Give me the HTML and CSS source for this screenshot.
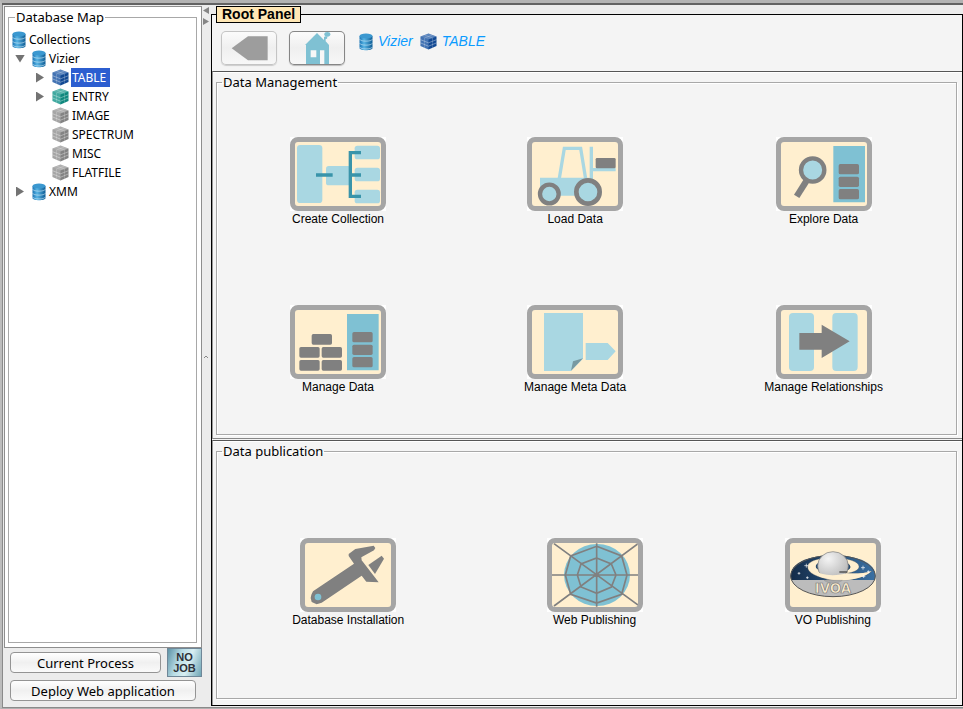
FILE: index.html
```html
<!DOCTYPE html>
<html lang="en">
<head>
  <meta charset="UTF-8" />
  <title>Root Panel</title>
  <link rel="stylesheet" href="styles.css">
</head>
<body>

<!-- shared icons -->
<svg class="defs" aria-hidden="true">
  <defs>
    <linearGradient id="dbFill">
      <stop offset="0" stop-color="#1a74b4"/>
      <stop offset="0.35" stop-color="#58b4e4"/>
      <stop offset="1" stop-color="#0d5c95"/>
    </linearGradient>
    <symbol id="db" viewBox="0 0 14 18">
      <path d="M.5 3v12c0 3 13 3 13 0V3z" fill="url(#dbFill)"/>
      <ellipse cx="7" cy="3" rx="6.500" ry="2.500" fill="#3b98d0"/>
      <path d="M.5 6.200c1 2.600 12 2.600 13 0M.5 10.200c1 2.600 12 2.600 13 0M.5 14c1 2.600 12 2.600 13 0" fill="none" stroke="#d4ebf7" stroke-opacity=".75" stroke-width=".8"/>
    </symbol>
    <symbol id="cube" viewBox="0 0 17 17">
      <path d="M8.500 .5L16.500 3.500V13L8.500 16.500L.5 13V3.500z" fill="currentColor"/>
      <path d="M8.500 .5L16.500 3.500L8.500 6.500L.5 3.500z" fill="#fff" fill-opacity=".3"/>
      <path d="M.5 3.500L8.500 6.500V16.500L.5 13z" fill="#fff" fill-opacity=".2"/>
      <path d="M8.500 6.500L16.500 3.500V13L8.500 16.500z" fill="#000" fill-opacity=".08"/>
      <path d="M.5 6.700L8.500 9.800L16.500 6.700M.5 9.900L8.500 13.200L16.500 9.900" fill="none" stroke="#fff" stroke-opacity=".5" stroke-width=".7"/>
      <path d="M4.500 5V14.800M12.500 5V14.800M4.500 2L12.500 5M12.500 2L4.500 5" fill="none" stroke="#fff" stroke-opacity=".3" stroke-width=".6"/>
    </symbol>
  </defs>
</svg>

<div class="window">
  <aside class="sidebar">
    <div class="map-panel">
      <fieldset class="group map">
        <legend>Database Map</legend>
        <ul class="tree">
          <li>
            <div class="node"><svg class="icon"><use href="#db"/></svg><span>Collections</span></div>
            <ul>
              <li>
                <div class="node"><button class="toggle open" aria-label="Collapse Vizier"></button><svg class="icon"><use href="#db"/></svg><span>Vizier</span></div>
                <ul>
                  <li><div class="node"><button class="toggle" aria-label="Expand TABLE"></button><svg class="icon cube blue"><use href="#cube"/></svg><span class="selected">TABLE</span></div></li>
                  <li><div class="node"><button class="toggle" aria-label="Expand ENTRY"></button><svg class="icon cube teal"><use href="#cube"/></svg><span>ENTRY</span></div></li>
                  <li><div class="node leaf"><svg class="icon cube"><use href="#cube"/></svg><span>IMAGE</span></div></li>
                  <li><div class="node leaf"><svg class="icon cube"><use href="#cube"/></svg><span>SPECTRUM</span></div></li>
                  <li><div class="node leaf"><svg class="icon cube"><use href="#cube"/></svg><span>MISC</span></div></li>
                  <li><div class="node leaf"><svg class="icon cube"><use href="#cube"/></svg><span>FLATFILE</span></div></li>
                </ul>
              </li>
              <li>
                <div class="node"><button class="toggle" aria-label="Expand XMM"></button><svg class="icon"><use href="#db"/></svg><span>XMM</span></div>
              </li>
            </ul>
          </li>
        </ul>
      </fieldset>
    </div>
    <div class="actions">
      <div class="job-row">
        <button class="btn">Current Process</button>
        <button class="job">NO JOB</button>
      </div>
      <button class="btn deploy">Deploy Web application</button>
    </div>
  </aside>

  <div class="splitter">
    <svg width="9" height="20" viewBox="0 0 9 20"><path d="M7 1v7L1 4.500zM1 12v7l6-3.500z" fill="#858585"/></svg>
    <svg class="grip" width="9" height="6" viewBox="0 0 9 6"><path d="M2 4l2-2 2 2" fill="none" stroke="#888"/></svg>
  </div>

  <main class="root">
    <h1 class="root-title">Root Panel</h1>

    <header class="toolbar">
      <button class="nav" aria-label="Back" disabled>
        <svg width="56" height="34" viewBox="0 0 168 102"><path d="M32 52L81 16h59v72H81z" fill="#9d9d9d"/></svg>
      </button>
      <button class="nav home" aria-label="Home">
        <svg width="56" height="34" viewBox="266 93 168 102">
          <path d="M314 135L350 99l21 21v-10h5v14l10 11v57H317v-57z" fill="#7fc1d3"/>
          <ellipse cx="381" cy="103" rx="9" ry="7" fill="#7fc1d3"/>
          <circle cx="377" cy="113" r="4" fill="#7fc1d3"/>
          <path d="M331 151h17v21h-17zM359 151h13v41h-13z" fill="#f7f7f7"/>
        </svg>
      </button>
      <nav class="path">
        <a href="#vizier"><svg class="icon"><use href="#db"/></svg>Vizier</a>
        <a href="#table"><svg class="icon cube blue"><use href="#cube"/></svg>TABLE</a>
      </nav>
    </header>

    <section class="panel management">
      <fieldset class="group tiles">
        <legend>Data Management</legend>

        <button class="tile">
          <span class="frame"><svg viewBox="42 36 258 192">
            <g fill="#a9d7e2">
              <rect x="48" y="45" width="76" height="174" rx="10"/>
              <rect x="135" y="108" width="74" height="58" rx="8"/>
              <rect x="221" y="47" width="76" height="41" rx="8"/>
              <rect x="221" y="113" width="76" height="41" rx="8"/>
              <rect x="221" y="179" width="76" height="41" rx="8"/>
            </g>
            <path d="M105 135h50M240 68h-32v131h32M208 135h32" fill="none" stroke="#3994aa" stroke-width="10"/>
          </svg></span>
          Create Collection
        </button>

        <button class="tile">
          <span class="frame"><svg viewBox="45 36 258 192">
            <path d="M69 143h149v54H69z" fill="#a9d7e2"/>
            <path d="M127 145L142 55h49l15 92M223 50v112M225 119h71" fill="none" stroke="#a9d7e2" stroke-width="10"/>
            <rect x="236" y="84" width="60" height="31" rx="4" fill="#808080"/>
            <circle cx="97" cy="192" r="28" fill="#a9d7e2" stroke="#808080" stroke-width="13"/>
            <circle cx="213" cy="186" r="35" fill="#a9d7e2" stroke="#808080" stroke-width="14"/>
          </svg></span>
          Load Data
        </button>

        <button class="tile">
          <span class="frame"><svg viewBox="45 36 258 192">
            <path d="M202 48h95v169h-95z" fill="#7fc1d3"/>
            <g fill="#808080">
              <rect x="218" y="102" width="61" height="31" rx="5"/>
              <rect x="218" y="140" width="61" height="31" rx="5"/>
              <rect x="218" y="177" width="61" height="31" rx="5"/>
            </g>
            <path d="M125 147L92 199" stroke="#808080" stroke-width="19"/>
            <circle cx="140" cy="120" r="35" fill="#a9d7e2" stroke="#808080" stroke-width="13"/>
          </svg></span>
          Explore Data
        </button>

        <button class="tile">
          <span class="frame"><svg viewBox="42 36 258 192">
            <path d="M198 48h95v169h-95z" fill="#7fc1d3"/>
            <g fill="#808080">
              <rect x="214" y="102" width="61" height="31" rx="5"/>
              <rect x="214" y="140" width="61" height="31" rx="5"/>
              <rect x="214" y="177" width="61" height="31" rx="5"/>
              <rect x="92" y="108" width="61" height="32" rx="5"/>
              <rect x="55" y="147" width="61" height="32" rx="5"/>
              <rect x="122" y="147" width="61" height="32" rx="5"/>
              <rect x="55" y="186" width="61" height="32" rx="5"/>
              <rect x="122" y="186" width="61" height="32" rx="5"/>
            </g>
          </svg></span>
          Manage Data
        </button>

        <button class="tile">
          <span class="frame"><svg viewBox="45 36 258 192">
            <path d="M81 45h117v137l-36 37H81zM206 135h66l24 25l-24 26h-66z" fill="#a9d7e2"/>
            <path d="M198 181L162 218L168 190z" fill="#7899a1"/>
          </svg></span>
          Manage Meta Data
        </button>

        <button class="tile">
          <span class="frame"><svg viewBox="72 36 258 192">
            <rect x="96" y="45" width="75" height="174" rx="12" fill="#a9d7e2"/>
            <rect x="226" y="45" width="76" height="174" rx="12" fill="#a9d7e2"/>
            <path d="M127 105h67V80l84 50l-84 50v-25h-67z" fill="#808080"/>
          </svg></span>
          Manage Relationships
        </button>
      </fieldset>
    </section>

    <section class="panel publication">
      <fieldset class="group tiles">
        <legend>Data publication</legend>

        <button class="tile">
          <span class="frame"><svg viewBox="60 39 258 192">
            <path d="M79 194L84 184L207 101L191 78V72L211 57L266 47L271 54L267 61L229 82L230 91L281 157L244 155L230 137L110 218L95 223L80 216L77 204z" fill="#808080"/>
            <path d="M250 105L290 77L297 86L270 132z" fill="#808080"/>
            <circle cx="99" cy="201" r="10" fill="#7fc1d3"/>
          </svg></span>
          Database Installation
        </button>

        <button class="tile">
          <span class="frame"><svg viewBox="39 39 258 192">
            <ellipse cx="174" cy="135" rx="99" ry="93" fill="#7fc1d3"/>
            <path d="M173 40v190M39 135h262M45 41L301 228M297 41L45 228M173 49L248 78L264 135L248 193L173 219L95 193L79 135L95 78zM173 84L217 102L231 135L217 171L173 190L126 171L115 135L126 102z" fill="none" stroke="#808080" stroke-width="5"/>
            <circle cx="173" cy="135" r="7" fill="#808080"/>
          </svg></span>
          Web Publishing
        </button>

        <button class="tile">
          <span class="frame"><svg viewBox="39 39 258 192">
            <defs>
              <radialGradient id="planet" cx=".35" cy=".25" r=".8">
                <stop offset="0" stop-color="#f4f4f4"/>
                <stop offset="1" stop-color="#b4b4b4"/>
              </radialGradient>
              <linearGradient id="sky">
                <stop offset="0" stop-color="#142c49"/>
                <stop offset="1" stop-color="#3a70a3"/>
              </linearGradient>
            </defs>
            <ellipse cx="168" cy="138" rx="127" ry="62" fill="#bcbcbc"/>
            <path d="M42 150C30 105 86 76 168 76S306 105 294 150z" fill="url(#sky)"/>
            <ellipse cx="168" cy="138" rx="127" ry="62" fill="none" stroke="#555" stroke-width="3"/>
            <path d="M92 110C92 73 243 76 246 109C247 121 227 128 208 130C255 132 279 128 284 123C260 147 204 155 164 149C120 143 91 128 92 110z" fill="#ffefcf" stroke="#555" stroke-width="1"/>
            <path d="M117 113C113 99 130 92 168 92C208 92 223 103 220 113C215 131 127 132 117 113z" fill="#27496d"/>
            <ellipse cx="168" cy="108" rx="46" ry="43" fill="url(#planet)" stroke="#777" stroke-width="2"/>
            <path d="M113 117C126 138 175 139 210 130C233 132 266 130 284 123C258 148 205 154 164 149C125 142 103 131 113 117z" fill="#ffefcf"/>
            <path d="M187 126h24" stroke="#555" stroke-width="4"/>
            <path d="M141 151c14 11 42 11 55 0z" fill="#aaa" stroke="#888"/>
            <path d="M88 101v12M82 107h12M66 126v8M62 130h8M91 139v8M87 143h8M258 107v12M252 113h12M274 121v8M270 125h8M260 134v10M255 139h10" stroke="#fff" stroke-width="2"/>
            <text x="168" y="189" text-anchor="middle" class="ivoa">IVOA</text>
          </svg></span>
          VO Publishing
        </button>
      </fieldset>
    </section>
  </main>
</div>

</body>
</html>
```

FILE: styles.css
```css
* { box-sizing: border-box; }

body {
  margin: 0;
  background: #ececec;
  color: #000;
  font-family: "Noto Sans", sans-serif;
  font-size: 13px;
}

button {
  margin: 0;
  padding: 0;
  border: 0;
  background: none;
  color: inherit;
  font: inherit;
}

svg { display: block; }
.defs { position: absolute; width: 0; height: 0; }

.window {
  display: flex;
  min-height: 100vh;
  border-top: 3px solid #b3b3b3;
  border-bottom: 1px solid #b0b0b0;
  border-left: 2px solid #bcbcbc;
  background: #ececec;
  box-shadow: inset 0 2px #626262, inset 1px 0 #8a8a8a, inset 0 -1px #8a8a8a;
}

/* left side */
.sidebar {
  display: flex;
  flex-direction: column;
  width: 200px;
  padding: 3px 0 7px 2px;
}

.map-panel {
  display: flex;
  flex: 1;
  padding: 2px 4px 4px 3px;
  border: 1px solid #8e8e8e;
  background: #fff;
}

.group {
  margin: 0;
  border: 1px solid #a8a8a8;
  min-width: 0;
}

.group legend {
  padding: 0 1px;
  margin-left: 4px;
  line-height: 16px;
}

.map {
  flex: 1;
  padding: 5px 0 0 2px;
}

.tree, .tree ul {
  margin: 0;
  padding: 0;
  list-style: none;
}

.tree ul ul { padding-left: 20px; }

.node {
  display: flex;
  align-items: center;
  height: 19px;
  font-size: 12px;
}

.node span {
  padding: 0 4px 0 1px;
  line-height: 19px;
}

.node .selected {
  background: #2c5ed0;
  color: #fff;
}

.leaf { padding-left: 20px; }

.icon {
  flex: none;
  width: 14px;
  height: 18px;
  margin: 0 2px 0 1px;
}

.icon.cube {
  width: 17px;
  height: 17px;
  color: #8f8f8f;
}

.icon.blue { color: #1450a0; }
.icon.teal { color: #129489; }

.toggle {
  flex: none;
  width: 20px;
  height: 19px;
}

.toggle::before {
  content: "";
  display: block;
  width: 8px;
  height: 10px;
  margin-left: 5px;
  background: #737373;
  clip-path: polygon(0 0, 100% 50%, 0 100%);
}

.toggle.open::before {
  width: 10px;
  height: 8px;
  margin-left: 4px;
  clip-path: polygon(0 0, 100% 0, 50% 100%);
}

.actions { padding-left: 6px; }

.job-row {
  display: flex;
  align-items: center;
  gap: 6px;
  margin-bottom: 3px;
}

.btn {
  flex: 1;
  height: 21px;
  border: 1px solid #949494;
  border-radius: 4px;
  background: linear-gradient(#fff, #f0f0f0 50%, #fafafa);
  line-height: 18px;
}

.deploy { width: 186px; }

.job {
  width: 35px;
  height: 29px;
  padding: 0 4px;
  border: 1px solid #6f8798;
  background: linear-gradient(110deg, #5e93a6, #b9dde6 35%, #d8eef2 60%, #6fa5b5);
  color: #2c3038;
  font-family: "Liberation Sans", sans-serif;
  font-size: 11px;
  font-weight: bold;
  line-height: 11px;
}

/* divider */
.splitter {
  display: flex;
  flex-direction: column;
  width: 9px;
  padding: 3px 0 20px;
}

.grip { margin: auto 0; }

/* right side */
.root {
  position: relative;
  display: flex;
  flex: 1;
  flex-direction: column;
  min-width: 0;
  margin: 11px 0 2px;
  border: 1px solid #000;
  background: #f4f4f4;
}

.root-title {
  position: absolute;
  top: -9px;
  left: 4px;
  margin: 0;
  padding: 0 5px 1px;
  border: 1px solid #000;
  background: #ffe7b5;
  font: bold 14px/14px "Liberation Sans", sans-serif;
}

.toolbar {
  display: flex;
  gap: 12px;
  height: 56px;
  padding: 16px 9px 0;
}

.nav {
  width: 56px;
  height: 34px;
  border-radius: 5px;
  background: linear-gradient(#fcfcfc, #efefef 50%, #f8f8f8);
  box-shadow: inset 0 0 0 1px #c4c4c4, 0 1px 1px #ccc;
}

.nav.home { box-shadow: inset 0 0 0 1px #868686, 0 1px 1px #bbb; }

.path {
  display: flex;
  align-items: flex-start;
  gap: 6px;
  padding: 1px 0 0 1px;
}

.path a {
  display: flex;
  align-items: center;
  gap: 3px;
  height: 19px;
  color: #0a9bff;
  font: italic 14px/19px "Liberation Sans", sans-serif;
  text-decoration: none;
}

.panel {
  display: flex;
  border-top: 1px solid #555;
  border-left: 1px solid #999;
  box-shadow: inset 0 1px #fff;
}

.management {
  flex: 370;
  padding: 2px 5px 3px 3px;
  border-bottom: 1px solid #888;
}

.publication {
  flex: 262;
  margin-top: 1px;
  padding: 2px 5px 6px 3px;
}

.panel .group {
  flex: 1;
  box-shadow: inset 1px 1px #fff, 1px 1px #fff;
}

.tiles {
  display: grid;
  grid-template-columns: repeat(3, auto);
  grid-auto-rows: 1fr;
  place-items: center;
  padding: 8px 4px 0;
}

.panel .group legend { margin-left: 1px; }

.tile {
  display: flex;
  flex-direction: column;
  align-items: center;
  font: 12px/16px "Liberation Sans", sans-serif;
}

.frame {
  width: 96px;
  background: #fff;
}

.frame svg {
  width: 96px;
  height: 74px;
  border: 5px solid #a5a5a5;
  border-radius: 8px;
  background: #ffefcf;
}

.ivoa {
  fill: #ffefcf;
  stroke: #777;
  stroke-width: 2px;
  font: bold 40px "DejaVu Sans", sans-serif;
}
```
